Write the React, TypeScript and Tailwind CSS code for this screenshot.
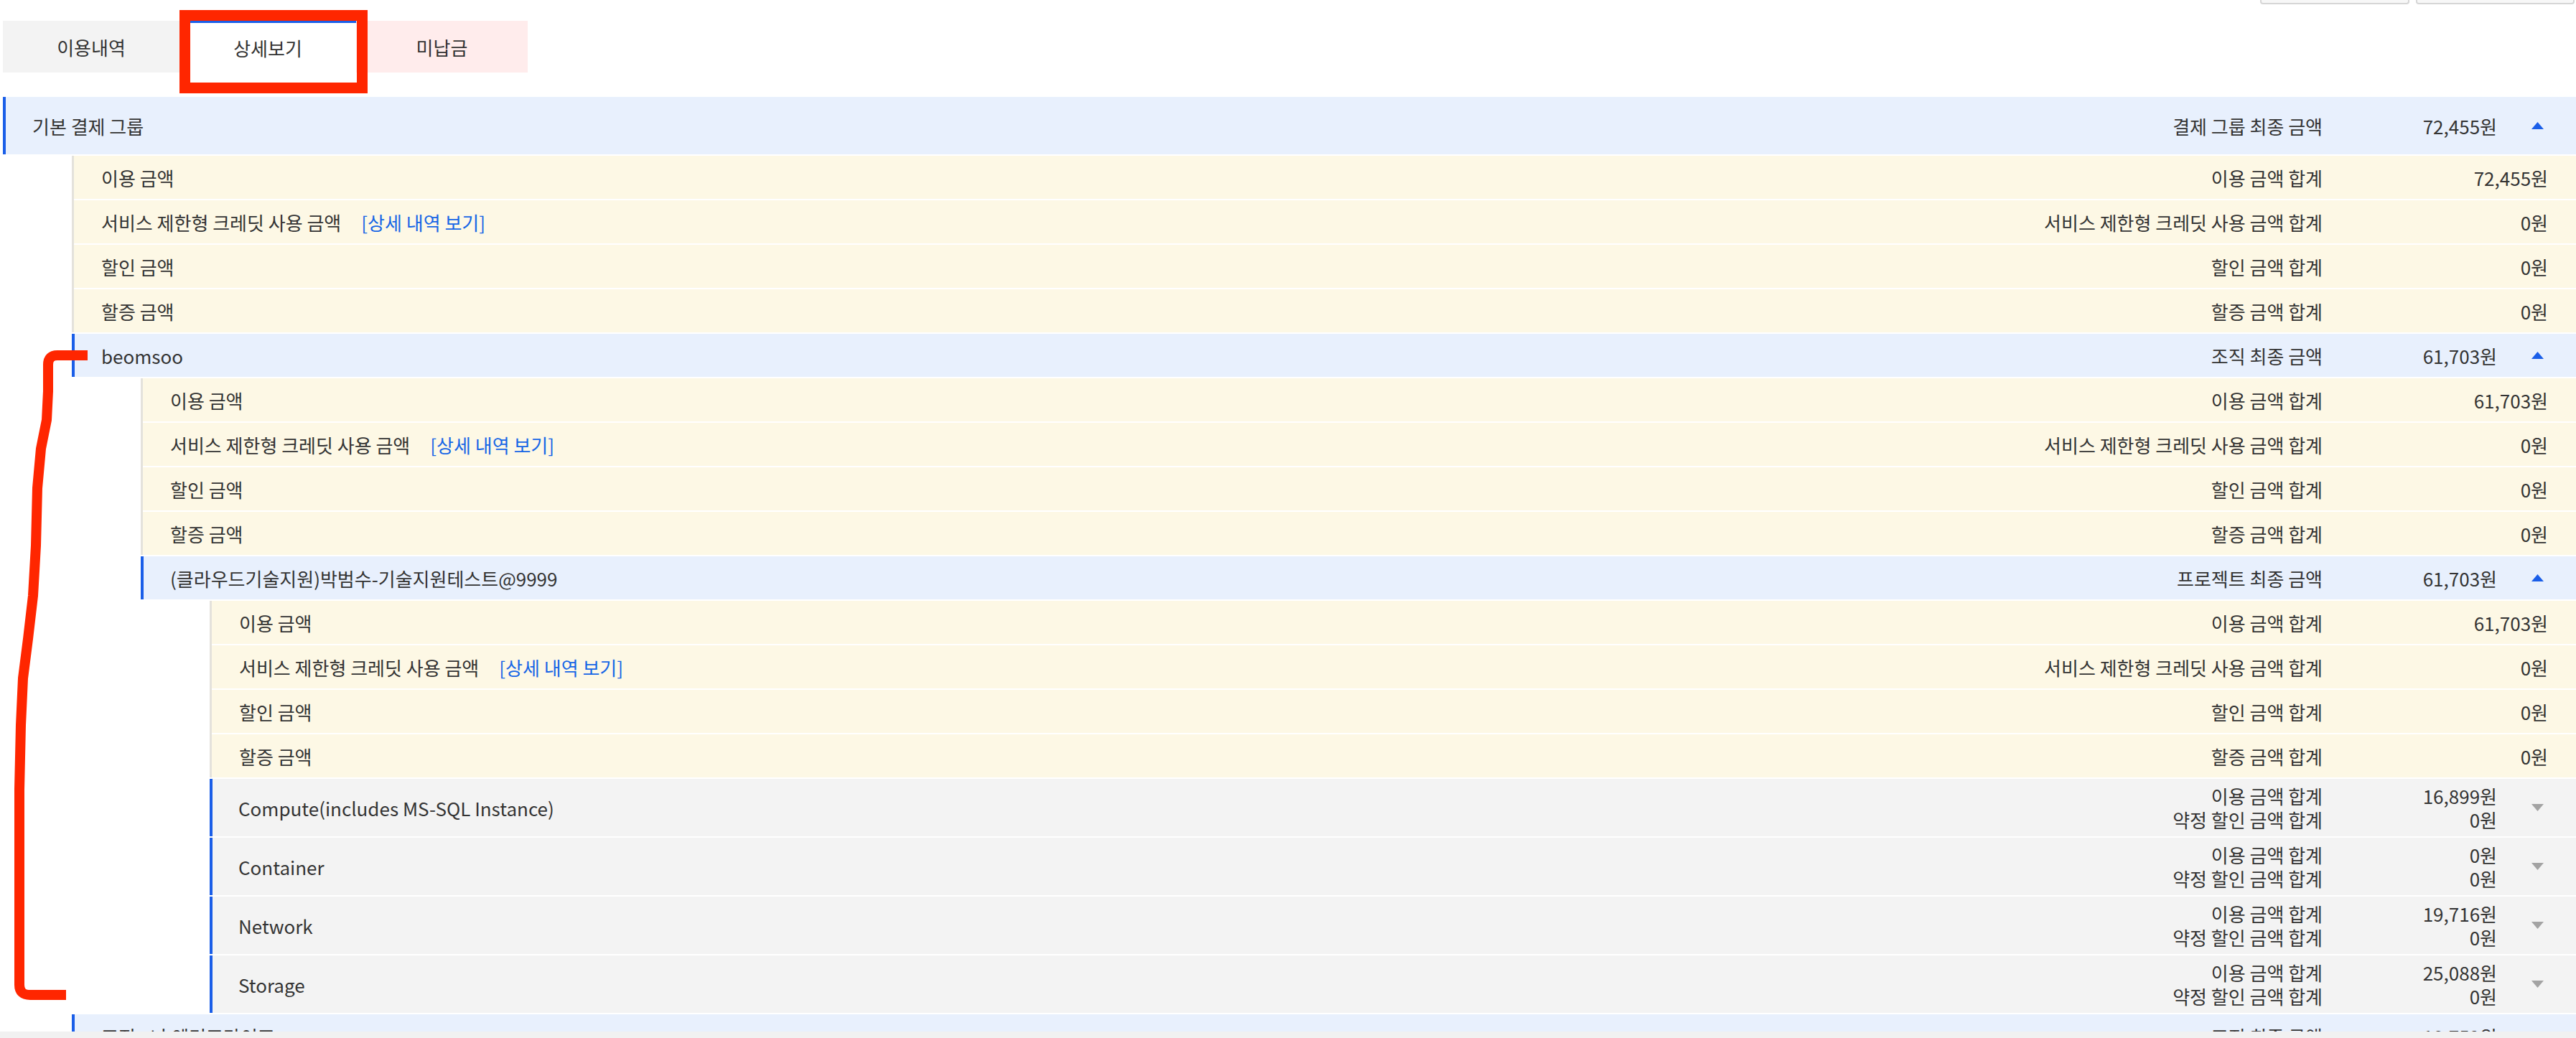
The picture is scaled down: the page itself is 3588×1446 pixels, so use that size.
const FONT = "font-['Noto_Sans_CJK_KR','Noto_Sans',sans-serif]";

function Up({ gray }: { gray?: boolean }) {
  return (
    <svg width="17" height="10" viewBox="0 0 17 10">
      {gray ? <polygon points="0,0 17,0 8.5,10" fill="#a3a3a3" /> : <polygon points="8.5,0 17,10 0,10" fill="#1a5ee8" />}
    </svg>
  );
}

function HeadRow({ title, label, value, tall }: { title: string; label: string; value: string; tall?: boolean }) {
  return (
    <div className={`flex items-center bg-[#e8f0fd] border-l-4 border-[#1a5ee8] ${tall ? "h-[80px]" : "h-[60px]"}`}>
      <span className="pl-[37px] flex-1">{title}</span>
      <span>{label}</span>
      <div className="w-[353px] flex items-center">
        <span className="w-[243px] text-right">{value}</span>
        <div className="flex-1 flex justify-end pr-[45px]">
          <Up />
        </div>
      </div>
    </div>
  );
}

function YellowGroup({ use }: { use: string }) {
  const rows = [
    { name: "이용 금액", label: "이용 금액 합계", value: use },
    { name: "서비스 제한형 크레딧 사용 금액", label: "서비스 제한형 크레딧 사용 금액 합계", value: "0원", link: true },
    { name: "할인 금액", label: "할인 금액 합계", value: "0원" },
    { name: "할증 금액", label: "할증 금액 합계", value: "0원" },
  ];
  return (
    <div className="flex flex-col gap-[2px] border-l-[3px] border-[#e4e2dc]">
      {rows.map((r) => (
        <div key={r.name} className="flex items-center h-[60px] bg-[#fdf8e5]">
          <div className="flex-1 pl-[38px] flex items-center">
            <span>{r.name}</span>
            {r.link && <span className="ml-[28px] text-[#1565e6]">[상세 내역 보기]</span>}
          </div>
          <span>{r.label}</span>
          <span className="w-[353px] text-right pr-[39px]">{r.value}</span>
        </div>
      ))}
    </div>
  );
}

function ServiceRow({ name, use }: { name: string; use: string }) {
  return (
    <div className="flex items-center h-[80px] bg-[#f3f3f3] border-l-4 border-[#1a5ee8]">
      <span className="pl-[36px] flex-1">{name}</span>
      <div className="flex flex-col items-end leading-[33px]">
        <span>이용 금액 합계</span>
        <span>약정 할인 금액 합계</span>
      </div>
      <div className="w-[353px] flex items-center">
        <div className="w-[243px] flex flex-col items-end leading-[33px]">
          <span>{use}</span>
          <span>0원</span>
        </div>
        <div className="flex-1 flex justify-end pr-[45px]">
          <Up gray />
        </div>
      </div>
    </div>
  );
}

export default function App() {
  return (
    <div className={`relative w-[3588px] h-[1446px] overflow-hidden bg-white flex flex-col text-[26px] text-[#333] ${FONT}`}>
      <div className="flex-1 overflow-hidden pl-[4px]">
        <div className="flex justify-end gap-[9px] h-[6px] pr-[2px]">
          <div className="w-[208px] h-[6px] bg-[#f7f7f7] border-2 border-t-0 border-[#d6d6d6] rounded-b-[4px]" />
          <div className="w-[221px] h-[6px] bg-[#f7f7f7] border-2 border-t-0 border-[#d6d6d6] rounded-b-[4px]" />
        </div>

        <div className="flex mt-[23px] h-[72px]">
          <div className="w-[246px] bg-[#f3f3f3] flex items-center justify-center">이용내역</div>
          <div className="w-[246px] bg-white border-t-[3px] border-[#1a5ee8] flex items-center justify-center">상세보기</div>
          <div className="w-[239px] bg-[#ffecec] flex items-center justify-center">미납금</div>
        </div>

        <div className="mt-[34px] flex flex-col gap-[2px]">
          <HeadRow tall title="기본 결제 그룹" label="결제 그룹 최종 금액" value="72,455원" />
          <div className="ml-[96px] flex flex-col gap-[2px]">
            <YellowGroup use="72,455원" />
            <HeadRow title="beomsoo" label="조직 최종 금액" value="61,703원" />
            <div className="ml-[96px] flex flex-col gap-[2px]">
              <YellowGroup use="61,703원" />
              <HeadRow title="(클라우드기술지원)박범수-기술지원테스트@9999" label="프로젝트 최종 금액" value="61,703원" />
              <div className="ml-[96px] flex flex-col gap-[2px]">
                <YellowGroup use="61,703원" />
                <ServiceRow name="Compute(includes MS-SQL Instance)" use="16,899원" />
                <ServiceRow name="Container" use="0원" />
                <ServiceRow name="Network" use="19,716원" />
                <ServiceRow name="Storage" use="25,088원" />
              </div>
            </div>
            <HeadRow title="조직 - 나 엔터프라이즈" label="조직 최종 금액" value="10,752원" />
          </div>
        </div>
      </div>
      <div className="h-[9px] bg-[#f1f1f1]" />

      <div className="absolute left-[250px] top-[14px] w-[262px] h-[116px] border-[15px] border-[#ff2600]" />
      <svg className="absolute left-0 top-0 pointer-events-none" width="200" height="1446">
        <path
          d="M122 495 L80 495 Q67 495 67 508 L67 545 L65 585 L57 625 L52 680 L50 760 L46 830 L39 890 L32 945 L29 1010 L27 1100 L27 1200 L27 1372 Q27 1386 42 1386 L92 1386"
          fill="none"
          stroke="#ff2600"
          strokeWidth="14"
          strokeLinejoin="round"
        />
      </svg>
    </div>
  );
}
